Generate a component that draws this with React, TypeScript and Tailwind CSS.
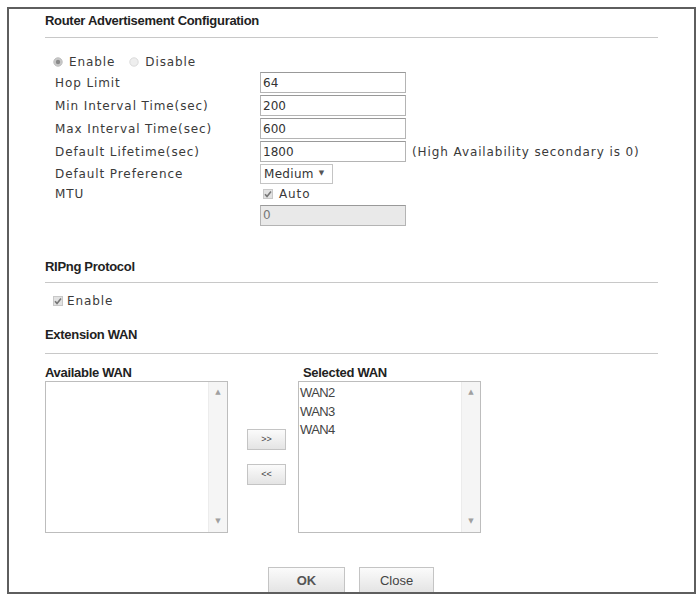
import React from 'react'

const labelCls = "w-[205px] shrink-0 text-[12px] tracking-[0.9px] text-[#3a3a3a]"

function TextBox({ value, disabled = false }: { value: string; disabled?: boolean }) {
  return (
    <div
      className={`flex h-[21px] w-[146px] items-center border border-[#b4b4b4] border-t-[#999] pl-[2px] text-[12px] text-[#333] ${
        disabled ? 'bg-[#e9e9e9] text-[#777]' : 'bg-white'
      }`}
    >
      {value}
    </div>
  )
}

function Check({ className = '' }: { className?: string }) {
  return (
    <span className={`inline-flex h-[10px] w-[10px] items-center justify-center ${className}`}>
      <svg viewBox="0 0 10 10" className="h-[10px] w-[10px]">
        <rect x="0.5" y="0.5" width="9" height="9" fill="#e2e2e2" stroke="#c8c8c8" />
        <path d="M2 5.2l2 2.2 4-5" fill="none" stroke="#777" strokeWidth="1.6" />
      </svg>
    </span>
  )
}

function Radio({ checked }: { checked: boolean }) {
  return (
    <svg viewBox="0 0 10 10" className="h-[10px] w-[10px]">
      <circle cx="5" cy="5" r="4.2" fill={checked ? '#c9c9c9' : '#eeeeee'} stroke={checked ? '#bcbcbc' : '#dadada'} />
      {checked && <circle cx="5" cy="5" r="2.2" fill="#8a8a8a" />}
    </svg>
  )
}

function SectionTitle({ children, className }: { children: React.ReactNode; className: string }) {
  return (
    <div className={`flex w-[613px] border-b border-[#c8c8c8] font-['Liberation_Sans',sans-serif] text-[13px] font-bold leading-[16px] tracking-[-0.3px] text-[#222] ${className}`}>
      {children}
    </div>
  )
}

function ListBox({ items }: { items: string[] }) {
  return (
    <div className="flex h-[152px] w-[183px] border border-[#bdbdbd] bg-white">
      <div className="flex-1 pl-[1px] pt-[2px] font-['Liberation_Sans',sans-serif] text-[13px] leading-[18.5px] tracking-[-0.6px] text-[#444]">
        {items.map((w) => (
          <div key={w}>{w}</div>
        ))}
      </div>
      <div className="flex w-[19px] flex-col items-center justify-between border-l border-[#ececec] bg-[#f5f5f5] py-[7px] text-[7px] leading-none text-[#a0a0a0]">
        <span>▲</span>
        <span>▼</span>
      </div>
    </div>
  )
}

function Btn({ children, className = '' }: { children: React.ReactNode; className?: string }) {
  return (
    <div
      className={`flex items-center justify-center border border-[#c4c4c4] bg-gradient-to-b from-[#fbfbfb] to-[#e4e4e4] text-[#444] ${className}`}
    >
      {children}
    </div>
  )
}

export default function App() {
  return (
    <div className="h-[595px] w-[698px] overflow-hidden bg-white pl-[7px] pt-[7px] font-['DejaVu_Sans',sans-serif]">
      <div className="h-[587px] w-[689px] overflow-hidden border-2 border-[#5e5e5e] pl-[36px]">
        <SectionTitle className="h-[29px] pt-[4px]">Router Advertisement Configuration</SectionTitle>

        <div className="pl-[10px]">
          <div className="mt-[15px] flex h-[18px] items-center text-[12px] tracking-[0.9px] text-[#3a3a3a]">
            <span className="ml-[-2px] mr-[6px]">
              <Radio checked />
            </span>
            <span>Enable</span>
            <span className="ml-[14px] mr-[6px]">
              <Radio checked={false} />
            </span>
            <span>Disable</span>
          </div>

          <div className="flex h-[23px] items-center">
            <span className={labelCls}>Hop Limit</span>
            <TextBox value="64" />
          </div>
          <div className="flex h-[23px] items-center">
            <span className={labelCls}>Min Interval Time(sec)</span>
            <TextBox value="200" />
          </div>
          <div className="flex h-[23px] items-center">
            <span className={labelCls}>Max Interval Time(sec)</span>
            <TextBox value="600" />
          </div>
          <div className="flex h-[23px] items-center">
            <span className={labelCls}>Default Lifetime(sec)</span>
            <TextBox value="1800" />
            <span className="ml-[6px] text-[12px] tracking-[0.9px] text-[#3a3a3a]">(High Availability secondary is 0)</span>
          </div>
          <div className="flex h-[21px] items-center">
            <span className={labelCls}>Default Preference</span>
            <div className="flex h-[20px] w-[73px] items-center border border-[#c4c4c4] bg-white pl-[3px] text-[12px] tracking-[0.3px] text-[#333]">
              Medium
              <span className="ml-[5px] text-[7px] text-[#555]">▼</span>
            </div>
          </div>
          <div className="flex h-[20px] items-center">
            <span className={labelCls}>MTU</span>
            <Check className="ml-[3px] mr-[6px]" />
            <span className="text-[12px] tracking-[0.9px] text-[#3a3a3a]">Auto</span>
          </div>
          <div className="flex h-[22px] items-center">
            <span className={labelCls}></span>
            <TextBox value="0" disabled />
          </div>
        </div>

        <SectionTitle className="h-[57px] items-end pb-[7px]">RIPng Protocol</SectionTitle>

        <div className="mt-[10px] flex h-[16px] items-center pl-[8px] text-[12px] tracking-[0.9px] text-[#3a3a3a]">
          <Check className="mr-[4px]" />
          <span>Enable</span>
        </div>

        <SectionTitle className="h-[45px] items-end pb-[10px]">Extension WAN</SectionTitle>

        <div className="mt-[11px] flex h-[16px] items-center font-['Liberation_Sans',sans-serif] text-[13px] font-bold tracking-[-0.3px] text-[#222]">
          <span className="w-[258px]">Available WAN</span>
          <span>Selected WAN</span>
        </div>

        <div className="flex">
          <ListBox items={[]} />
          <div className="flex w-[70px] flex-col pl-[19px] pt-[48px] font-['Liberation_Sans',sans-serif] text-[9px]">
            <Btn className="h-[21px] w-[39px]">&gt;&gt;</Btn>
            <Btn className="mt-[14px] h-[21px] w-[39px]">&lt;&lt;</Btn>
          </div>
          <ListBox items={['WAN2', 'WAN3', 'WAN4']} />
        </div>

        <div className="ml-[223px] mt-[34px] flex gap-[14px] font-['Liberation_Sans',sans-serif] text-[13px]">
          <Btn className="h-[26px] w-[77px] items-start pt-[3px] font-bold text-[#555]">OK</Btn>
          <Btn className="h-[26px] w-[75px] items-start pt-[3px]">Close</Btn>
        </div>
      </div>
    </div>
  )
}
